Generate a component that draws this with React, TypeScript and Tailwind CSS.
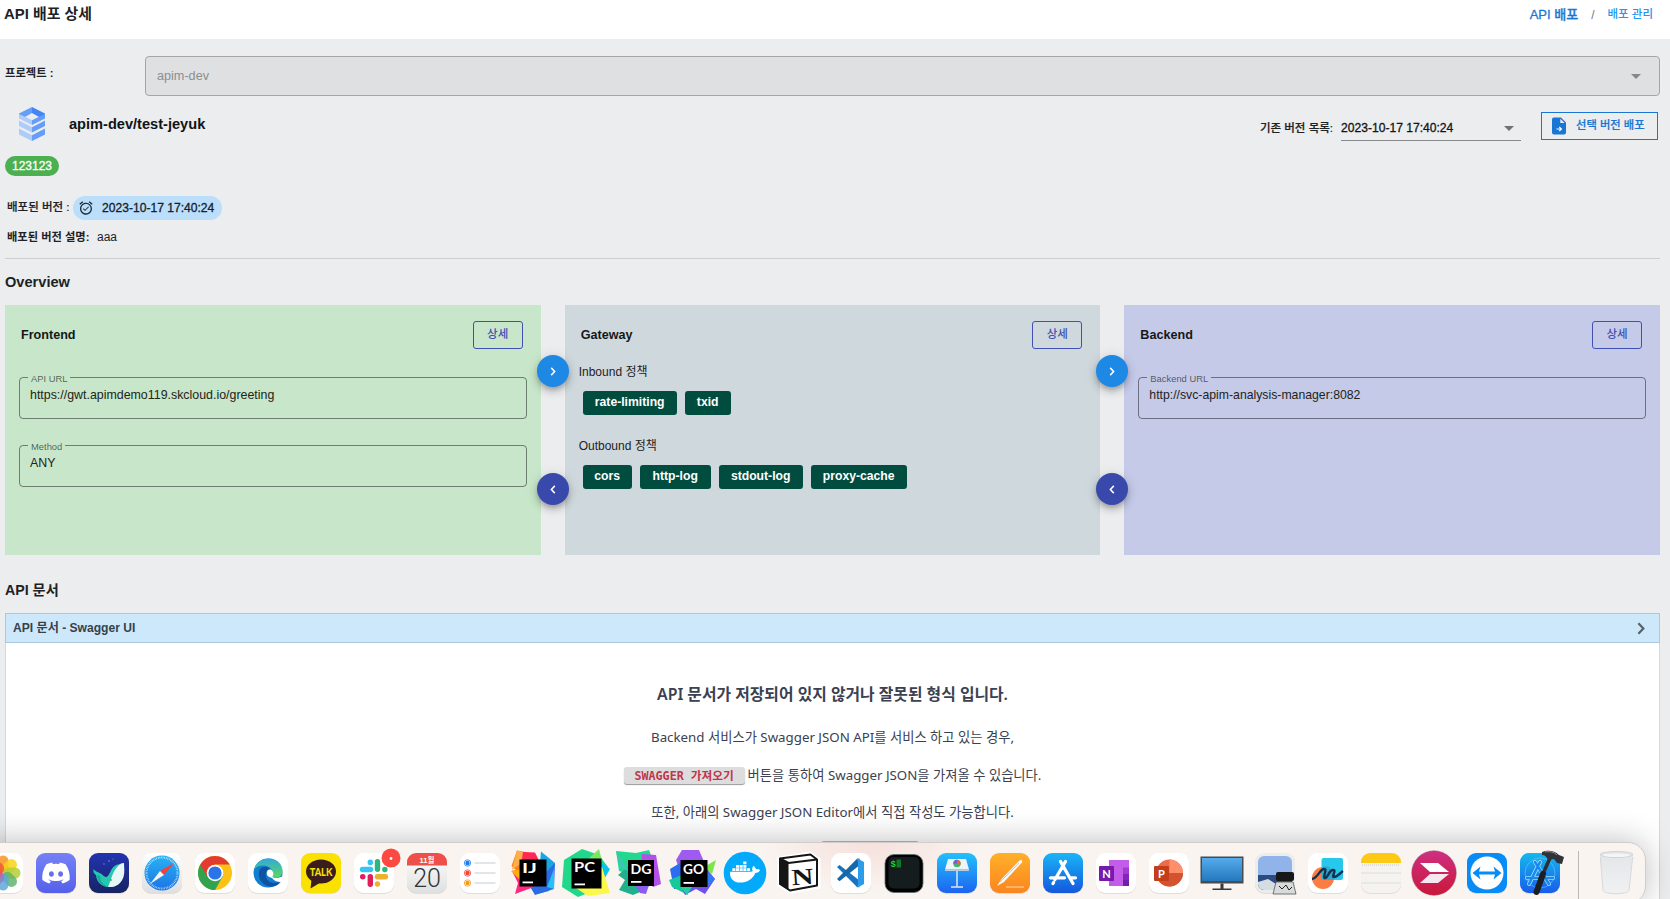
import React from "react";
import { FaDiscord, FaDocker } from "react-icons/fa";
import { SiNotion } from "react-icons/si";

const SANS = "font-['Liberation_Sans','Noto_Sans_CJK_KR',sans-serif]";

function Caret({ className }: { className: string }) {
  return (
    <svg viewBox="0 0 10 5" className={className}>
      <path d="M0 0h10L5 5z" fill="currentColor" />
    </svg>
  );
}

function StackLogo() {
  return (
    <svg viewBox="0 0 26 34" className="h-[34px] w-[26px]">
      <path d="M13 0 0 6.500V9l5 1.500L13 6z" fill="#669df6" />
      <path d="M13 0l13 6.500V9l-5 1.500L13 6z" fill="#4285f4" />
      <path d="M0 7v4.600l13 6.500v-4.900L5 9.300z" fill="#aecbfa" />
      <path d="M26 7v4.600l-13 6.500v-4.900l8-3.900z" fill="#669df6" />
      <path d="M0 13.600l13 6.600v5.200L0 18.900zM0 21.600l13 6.600V34L0 27.400z" fill="#aecbfa" />
      <path d="M26 13.600l-13 6.600v5.200l13-6.500zM26 21.600l-13 6.600V34l13-6.600z" fill="#669df6" />
    </svg>
  );
}

function AlarmIcon() {
  return (
    <svg viewBox="0 0 24 24" className="h-4 w-4 text-[#1c2b36]" fill="currentColor">
      <path d="M22 5.72l-4.6-3.86-1.29 1.53 4.6 3.86L22 5.72zM7.88 3.39L6.6 1.86 2 5.71l1.29 1.53 4.59-3.85zM12 4c-4.97 0-9 4.03-9 9s4.02 9 9 9a9 9 0 000-18zm0 16c-3.87 0-7-3.13-7-7s3.13-7 7-7 7 3.13 7 7-3.13 7-7 7zm-1.46-5.47L8.41 12.4l-1.06 1.06 3.18 3.18 6-6-1.06-1.06-4.93 4.95z" />
    </svg>
  );
}

function FileArrow() {
  return (
    <svg viewBox="0 0 14 18" className="h-[18px] w-[14px]">
      <path d="M2 .5h7L14 5.400v10.200a1.900 1.900 0 0 1-1.900 1.900H1.900A1.900 1.900 0 0 1 0 15.600V2.400A1.900 1.900 0 0 1 1.900.5z" fill="#1976d2" />
      <path d="M8.300 1.700V6h4.400z" fill="#ebedef" />
      <path d="M4.500 12h4M7.300 10l2.100 2-2.100 2" stroke="#fff" strokeWidth="1.200" fill="none" />
    </svg>
  );
}

function Chevron({ left, className }: { left?: boolean; className: string }) {
  return (
    <svg viewBox="0 0 6 10" className={className} fill="none" stroke="currentColor" strokeWidth="1.700">
      <path d={left ? "M5 1 1.200 5 5 9" : "M1 1l3.800 4L1 9"} />
    </svg>
  );
}

function Panel({ title, color, children }: { title: string; color: string; children: React.ReactNode }) {
  return (
    <section className={`h-[250px] flex-1 px-[14px] pt-4 ${color}`}>
      <div className="flex h-7 items-center justify-between pr-1 pl-[2px]">
        <h3 className="text-[12.6px] font-bold text-[#15181a]">{title}</h3>
        <button className="flex h-7 w-[50px] items-center justify-center rounded-[3px] border border-[#3f51b5] pb-[1px] text-[11.5px] font-medium text-[#3f51b5]">
          상세
        </button>
      </div>
      {children}
    </section>
  );
}

function Field({ label, value, className, valueClass }: { label: string; value: string; className: string; valueClass: string }) {
  return (
    <fieldset className={`h-[47px] rounded-[4px] border border-black/45 px-[10px] ${className}`}>
      <legend className="-ml-[2px] h-[10px] px-[3px] text-[9.4px] leading-[13px] text-black/60">{label}</legend>
      <div className={`mt-1 leading-[18px] text-[#1d2420] ${valueClass}`}>{value}</div>
    </fieldset>
  );
}

function Tags({ items }: { items: { name: string; w: string }[] }) {
  return (
    <div className="flex gap-2 pl-1">
      {items.map((t) => (
        <span key={t.name} className={`flex h-6 items-center justify-center rounded-[3px] bg-[#004d40] pb-[1px] text-[12.2px] font-bold text-white ${t.w}`}>
          {t.name}
        </span>
      ))}
    </div>
  );
}

function Arrows() {
  const base = "flex h-8 w-8 shrink-0 items-center justify-center rounded-full text-white shadow-[0_3px_5px_-1px_rgba(0,0,0,.2),0_5px_9px_rgba(0,0,0,.16),0_1px_14px_rgba(0,0,0,.1)]";
  return (
    <div className="z-10 -mx-1 flex w-8 shrink-0 flex-col gap-[86px] pt-[50px]">
      <span className={`${base} bg-[#1e88e5]`}><Chevron className="h-[9px] w-[6px]" /></span>
      <span className={`${base} bg-[#3949ab]`}><Chevron left className="h-[9px] w-[6px]" /></span>
    </div>
  );
}

/* ---------- dock ---------- */

function Tile({ children, fill = "#fff" }: { children?: React.ReactNode; fill?: string }) {
  return (
    <>
      <rect x="4" y="4.700" width="40" height="40" rx="9" fill="#000" opacity=".13" />
      <rect x="4" y="4" width="40" height="40" rx="9" fill={fill} />
      {children}
    </>
  );
}

function Grad({ id, a, b }: { id: string; a: string; b: string }) {
  return (
    <linearGradient id={id} x1="0" y1="0" x2="0" y2="1">
      <stop offset="0" stopColor={a} />
      <stop offset="1" stopColor={b} />
    </linearGradient>
  );
}

function JetBrains({ x, y, s, label, children }: { x: number; y: number; s: number; label: string; children: React.ReactNode }) {
  return (
    <>
      {children}
      <rect x={x} y={y} width={s} height={s} fill="#000" />
      <text x={x + 2.500} y={y + 13.500} fill="#fff" fontSize="13.500" fontWeight="700" fontFamily="Lato, sans-serif" textLength={label === "IJ" ? 15 : 21} lengthAdjust="spacingAndGlyphs">{label}</text>
      <rect x={x + 3} y={y + s - 5} width="10.500" height="1.800" fill="#fff" />
    </>
  );
}

const petals = ["#f7941d", "#f7d417", "#b5cf35", "#5eb56b", "#5fa8d8", "#8d7cc3", "#d65f8f", "#ef5a3c"];

const icons: React.ReactNode[] = [
  <Tile>
    {petals.map((c, i) => (
      <rect key={c} x="18.500" y="6.500" width="11" height="17" rx="5.500" fill={c} opacity=".85" transform={`rotate(${i * 45} 24 24)`} />
    ))}
  </Tile>,
  <Tile fill="url(#discord)">
    <FaDiscord x="9" y="9" size="30" color="#fff" />
  </Tile>,
  <Tile fill="url(#whale)">
    <path d="M8.500 20c1.500 2.500 5 3 8 5 1.500 1 3 3 5 3 3-1 4-8 8-11 3-2 6-2 9-3-1 4 1 9-1 15-2 6-7 9-13 9-9 0-13-6-13.500-12-2-1-3-3-2.500-6z" fill="#25c7b1" />
    <path d="M23 38c3-6 4-15 10-21 2-2 4-3 6-3 0 4 1 9-.5 14C36 35 31 38.500 23 38z" fill="#e8f6f5" />
    <path d="M12 26c1 8 6 12 12 12-6-2-9-5-9-11z" fill="#10a99a" />
    <circle cx="26" cy="31" r=".8" fill="#173" />
    <circle cx="19" cy="15" r=".7" fill="#7f8ff0" /><circle cx="24" cy="12" r=".8" fill="#7f8ff0" /><circle cx="28" cy="10" r=".6" fill="#7f8ff0" />
  </Tile>,
  <Tile fill="url(#silver)">
    <circle cx="24" cy="24" r="17.500" fill="url(#safari)" />
    <circle cx="24" cy="24" r="15.500" fill="none" stroke="#fff" strokeWidth="2" strokeDasharray=".6 1.030" opacity=".85" />
    <path d="M36 14 22 22l4 4z" fill="#f5403a" />
    <path d="M12 35l10-13 4 4z" fill="#f2f4f6" />
  </Tile>,
  <Tile>
    <circle cx="24" cy="24" r="17" fill="#fbc116" />
    <path d="M24 24 9.300 15.500A17 17 0 0 0 24 41l8-14z" fill="#31a350" />
    <path d="M9.300 15.500A17 17 0 0 1 38.700 15.500H24l-7.400 12.800z" fill="#e33b2e" />
    <circle cx="24" cy="24" r="8.300" fill="#fff" />
    <circle cx="24" cy="24" r="6.600" fill="#2a74e8" />
  </Tile>,
  <Tile>
    <circle cx="24" cy="24" r="14.500" fill="#0f7fd2" />
    <path d="M10 21C12 13 18 9.500 25 9.500c9 0 14 7 13.500 13.500-.5 5-5 6.500-10 5.500 3-7-3-12-9-12-5 0-8 2-9.500 4.500z" fill="url(#edge)" />
    <path d="M16 20c-4 9 3 18 13 17.500 3-.3 6-2 8-5-9 4-17-1-15-9 .5-2 2-4 4-4-4-3-8-2-10 .5z" fill="#1250a0" />
    <path d="M28 29c-4-1-6-3-5-6s4-3 5.500-1 1 4 0 5.500c1 2 5 2 9 0l1 1.500-2 4c-3 0-6-1-8.500-4z" fill="#fff" />
  </Tile>,
  <Tile fill="#fbe100">
    <ellipse cx="24" cy="22.500" rx="15" ry="12" fill="#3a1d1d" />
    <path d="M14.500 31l-1 8.500 10-6z" fill="#3a1d1d" />
    <text x="12.800" y="26.800" fontSize="11" fontWeight="900" fontFamily="Lato, sans-serif" fill="#fbe100" textLength="22.500" lengthAdjust="spacingAndGlyphs">TALK</text>
  </Tile>,
  <Tile>
    <g strokeWidth="5.400" strokeLinecap="round">
      <path d="M12.500 20.500h8" stroke="#36c5f0" /><path d="M20.300 13.300v.1" stroke="#36c5f0" />
      <path d="M27.500 12.700v7.500" stroke="#2eb67d" /><path d="M34.800 20.500h.1" stroke="#2eb67d" />
      <path d="M27.500 27.700h8" stroke="#ecb22e" /><path d="M27.500 35v.1" stroke="#ecb22e" />
      <path d="M20.300 27.700v7.500" stroke="#e01e5a" /><path d="M12.700 27.700h.1" stroke="#e01e5a" />
    </g>
    <circle cx="41" cy="9" r="9.500" fill="#fc4a42" /><circle cx="41" cy="9.500" r="1.400" fill="#fff" />
  </Tile>,
  <Tile fill="url(#silver)">
    <path d="M4 16.500V13a9 9 0 0 1 9-9h22a9 9 0 0 1 9 9v3.500z" fill="#ee4f49" />
    <text x="24" y="13.500" textAnchor="middle" fontSize="7.500" fontWeight="700" fill="#fff" fontFamily="Liberation Sans, Noto Sans CJK KR, sans-serif">11월</text>
    <text x="24" y="37.500" textAnchor="middle" fontSize="25" fontWeight="300" fill="#333" fontFamily="Roboto, sans-serif">20</text>
  </Tile>,
  <Tile>
    {["#1b7cf2", "#f24438", "#f59b1b"].map((c, i) => (
      <g key={c}>
        <circle cx="11.500" cy={14 + i * 10} r="3.200" fill="none" stroke={c} strokeWidth=".8" />
        <circle cx="11.500" cy={14 + i * 10} r="2.200" fill={c} />
        <path d={`M18.500 ${14 + i * 10}h21`} stroke="#c9cbce" strokeWidth="1" />
      </g>
    ))}
  </Tile>,
  <JetBrains x={10.500} y={10.500} s={27} label="IJ">
    <path d="M2.500 17 8 1.500l16 3 4 8-14 15z" fill="#fc801d" />
    <path d="M8 1.500l7 1.500-4 12-8 6z" fill="#fdb04a" />
    <path d="M14 3l12 .5 4 8-18 6z" fill="#fe2857" />
    <path d="M32 2.500 46 14l-6 28-12 3z" fill="#1aa6e4" />
    <path d="M38 22l8-8-1 26-19 6-6-10z" fill="#2b6be6" /><path d="M38 38l7-18v20z" fill="#22c4f2" />
    <path d="M3 22l8-2 14 18-19 7 3-11z" fill="#fe2a7f" /><path d="M2 22l10-2v12z" fill="#ffb000" />
  </JetBrains>,
  <JetBrains x={9.500} y={9.500} s={30} label="PC">
    <path d="M0 38 2 11 20 0l17 6 9 12-20 26-10 4z" fill="#21d789" />
    <path d="M37 0l3 12H24z" fill="#7be663" /><path d="M38 12l10 8-8 14z" fill="#07c3f2" />
    <path d="M40 18l8 26-22 3-12-8z" fill="#fcf84a" />
  </JetBrains>,
  <JetBrains x={13} y={11} s={26} label="DG">
    <path d="M1 2l20 2 13-3 6 16-20 10L4 22z" fill="#22d88f" />
    <path d="M27 5l14 1 5 29-8 3-12-20z" fill="#b350e8" />
    <path d="M3 26l12-10 20 20-5 5-12 5-14-5 6-10z" fill="#20b08b" />
    <path d="M20 36h14l-3 9-6-1z" fill="#8b5cf0" /><path d="M1 2l13 20-9-3z" fill="#3ac9b0" />
  </JetBrains>,
  <JetBrains x={12.500} y={11} s={27} label="GO">
    <path d="M14 1h17l6 14-24 10-5-14z" fill="#9f5bf0" />
    <path d="M2 20l10-6 6 26-12 0z" fill="#2c6cf0" /><path d="M1 31l13-5 6 20L4 38z" fill="#18c89a" />
    <path d="M48 11l-4 14-8-7z" fill="#7be648" />
    <path d="M39 20l8 10-10 15-9-5-11 6-4-8z" fill="#6f4ff0" /><path d="M12 38l12 0-5 8z" fill="#20d0a0" /><path d="M39 22l8 8-8 8z" fill="#2f7af0" />
  </JetBrains>,
  <>
    <circle cx="24" cy="24" r="21.300" fill="#03a9fa" />
    <FaDocker x="9" y="8" size="30" color="#fff" />
  </>,
  <>
    <path d="M5 9 36 4l9 6v28l-29 5L5 36z" fill="#fff" stroke="#fff" strokeWidth="3" strokeLinejoin="round" />
    <path d="M6 9.500 36.500 5.500 43 10.500v26L16 41.500 6 35z" fill="#fff" stroke="#151515" strokeWidth="2" strokeLinejoin="round" />
    <path d="M6 9.500 14.500 14v27L6 35z" fill="#151515" />
    <path d="M6 9.500 14.500 14 43 10.500" fill="none" stroke="#151515" strokeWidth="2" strokeLinejoin="round" />
    <text x="17.500" y="35.500" fontSize="23" fontWeight="700" fill="#151515" fontFamily="Liberation Serif, serif" transform="rotate(-4 28 27)" textLength="22" lengthAdjust="spacingAndGlyphs">N</text>
  </>,
  <Tile>
    <path d="M10 18l2.500-2 20 15.500v6.700L30 38z" fill="#1c72bd" />
    <path d="M10 30l2.500 2.200 20-16V9.600L30 9.800z" fill="#1768a8" />
    <path d="M30.500 9.500 37 13v22l-6.500 3.500L29 37.500l2-1.500V12l-2-1.500z" fill="#2b9bea" />
  </Tile>,
  <>
    <rect x="5" y="5.500" width="38" height="38" rx="9" fill="#000" stroke="#5b6a6e" strokeWidth=".8" />
    <rect x="8.500" y="8" width="31" height="31.500" rx="5" fill="#141c1e" />
    <text x="10.500" y="17.500" fontSize="9" fontWeight="700" fill="#1fd132" fontFamily="Liberation Mono, monospace">$</text>
    <rect x="16.500" y="10.500" width="4.500" height="8" fill="#0f7a20" />
  </>,
  <Tile fill="url(#keynote)">
    <path d="M15 10h18l3 10.500H12z" fill="#eef4fb" /><path d="M12 20.500h24v1.500H12z" fill="#b9cde4" />
    <circle cx="24" cy="14.500" r="3.700" fill="#40b868" /><path d="M24 14.500v-3.700a3.700 3.700 0 0 1 3.200 5.500z" fill="#f0603c" /><path d="M24 14.500l-3.700.3a3.700 3.700 0 0 1 3.700-4z" fill="#7a5cd0" />
    <path d="M24 22v15.500" stroke="#dce7f2" strokeWidth="1.500" /><path d="M18 38h12" stroke="#dce7f2" strokeWidth="1.500" />
  </Tile>,
  <Tile fill="url(#pages)">
    <path d="M11 37l4.500-7L33 12c2-2 4-1 3 1.500L18 33z" fill="#f7f7f5" /><path d="M14 33l19-19" stroke="#b9b2a8" strokeWidth=".7" />
    <path d="M20 38h18" stroke="#ffe6c0" strokeWidth=".9" />
  </Tile>,
  <Tile fill="url(#store)">
    <g stroke="#fff" strokeWidth="3.300" strokeLinecap="round">
      <path d="M26.500 12.500 16 30.500M21.500 12.500l12.500 22M11.500 28.800h14M31.500 28.800h5M14 34.500l.6-1" />
    </g>
  </Tile>,
  <Tile>
    <rect x="17" y="11" width="20" height="26" fill="#c45cea" />
    <path d="M31 18.500h6v7h-6z" fill="#a33bd0" /><path d="M31 25h6v6h-6z" fill="#8128b8" /><path d="M31 31h6v6h-6z" fill="#6f20a8" />
    <rect x="7" y="17" width="15" height="15" rx="1" fill="#7719aa" />
    <text x="14.500" y="28.500" textAnchor="middle" fontSize="11" fontWeight="700" fill="#fff" fontFamily="Lato, sans-serif">N</text>
  </Tile>,
  <Tile>
    <circle cx="24.500" cy="24" r="13.500" fill="#ed6c47" /><path d="M24.500 10.500A13.500 13.500 0 0 1 38 24H24.500z" fill="#ff8f6b" /><path d="M38 24a13.500 13.500 0 0 1-27 0z" fill="#d35230" />
    <rect x="9" y="17" width="15" height="15" rx="1" fill="#c43e1c" />
    <text x="16.500" y="28.500" textAnchor="middle" fontSize="11" fontWeight="700" fill="#fff" fontFamily="Lato, sans-serif">P</text>
  </Tile>,
  <>
    <rect x="2.500" y="7.500" width="43" height="27" fill="#4b4b4d" />
    <rect x="4" y="9" width="40" height="23" fill="url(#screen)" />
    <path d="M22.500 34.500h3v5h-3zM14.500 39.500h19v1.500h-19z" fill="#39393b" />
  </>,
  <Tile fill="#ececec">
    <rect x="7" y="7" width="34" height="34" rx="6" fill="#90b4ea" />
    <path d="M7 26h34v9a6 6 0 0 1-6 6H13a6 6 0 0 1-6-6z" fill="#2b4a80" /><path d="M7 33l10-3 8 5v6H13a6 6 0 0 1-6-6z" fill="#d6dde2" />
    <path d="M25 33h17l3 12H22z" fill="#d9dadb" stroke="#555" strokeWidth=".8" /><rect x="25" y="23" width="18" height="9" rx="2" fill="#171717" />
    <path d="M28 37l3 3 4-4 3 5 3-3" stroke="#222" strokeWidth="1" fill="none" />
  </Tile>,
  <Tile>
    <circle cx="19" cy="29" r="11" fill="#fb7d45" />
    <rect x="17.500" y="9" width="21.500" height="22" rx="2" fill="#28c8ec" /><path d="M17.500 19c6-4 9 0 12.500 5v7H19.500a2 2 0 0 1-2-2z" fill="#2f9fc4" opacity=".75" />
    <path d="M8 30c6-1 8-10 12-10s-2 9 1 9 4-8 8-8-2 7 1 7 5-3 9-6" stroke="#12324e" strokeWidth="2.400" fill="none" />
  </Tile>,
  <Tile fill="#f4f3f0">
    <path d="M4 14v-1a9 9 0 0 1 9-9h22a9 9 0 0 1 9 9v1z" fill="#fdc914" />
    <path d="M5 16h38" stroke="#bdbbb6" strokeWidth=".8" strokeDasharray="1 1" /><path d="M4 24h40M4 34h40" stroke="#d8d6d2" strokeWidth=".8" />
  </Tile>,
  <>
    <circle cx="24" cy="24" r="22.800" fill="#b8a8b0" /><circle cx="24" cy="24" r="22.200" fill="url(#skitch)" />
    <path d="M10 14h18l11 9H20z" fill="#fff" /><path d="M10 34h18l11-9H20z" fill="#f4e9ee" />
  </>,
  <Tile fill="#078cf7">
    <circle cx="24" cy="24" r="16.500" fill="#fff" />
    <path d="M9.500 24l8-6.500-1.500 5h16l-1.500-5 8 6.500-8 6.500 1.500-5H16l1.500 5z" fill="#078cf7" />
  </Tile>,
  <Tile fill="url(#xcode)">
    <circle cx="24" cy="24" r="15" fill="none" stroke="#79d3fb" strokeWidth=".7" opacity=".7" />
    <g fill="none" stroke="#a5dcfb" strokeWidth="4" strokeLinecap="round"><path d="M24 13l-11 22M19 13l14 22M11 29h26" /></g>
    <g fill="none" stroke="#1689ee" strokeWidth="2.500" strokeLinecap="round"><path d="M24 13l-11 22M19 13l14 22M11 29h26" /></g>
    <path d="M34 9 26 27" stroke="#2c2f36" strokeWidth="3.500" />
    <path d="M27 25 20.500 43" stroke="#1c1e22" strokeWidth="6" strokeLinecap="round" />
    <path d="M26 3c5-2 12-2 17 3l5 2-2 7-5-1-3-4-6 1c-1-3-3-5-6-5z" fill="#30333a" /><path d="M29 3c4-1 9 0 12 3" stroke="#8e939b" strokeWidth="1" fill="none" />
  </Tile>,
];

const TrashIcon = (
  <>
    <path d="M8 5.500 11 41c.5 5 25.500 5 26 0L41 5.500z" fill="url(#trash)" />
    <path d="M8.300 8 11 41c.5 5 25.500 5 26 0L40.700 8" fill="none" stroke="#d3d5d8" strokeWidth=".9" />
    <ellipse cx="24.500" cy="5.500" rx="16.500" ry="3" fill="#e3e5e7" stroke="#cdd0d3" strokeWidth=".9" />
    <ellipse cx="24.500" cy="6.200" rx="13.500" ry="1.800" fill="#f4f5f6" />
  </>
);

function DockIcon({ children }: { children: React.ReactNode }) {
  return (
    <div className="flex w-[53px] shrink-0 justify-center">
      <svg viewBox="0 0 48 48" className="h-12 w-12 overflow-visible">{children}</svg>
    </div>
  );
}

function Dock() {
  return (
    <div className="absolute top-[842px] -left-[25px] z-20 flex h-[62px] w-[1671px] rounded-r-[18px] border border-[#d0cdcb] bg-[#f9f4f0] bg-[radial-gradient(ellipse_110px_50px_at_895px_0px,#f6e0dc_0%,transparent_100%)] pt-[5.5px] shadow-[0_0_32px_rgba(0,0,0,.27)]">
      <svg className="absolute h-0 w-0">
        <defs>
          <Grad id="discord" a="#7681f6" b="#5560ea" />
          <Grad id="whale" a="#2333b0" b="#172463" />
          <Grad id="silver" a="#ffffff" b="#dedfe0" />
          <Grad id="safari" a="#28b3f5" b="#1b74e4" />
          <Grad id="edge" a="#32a9d8" b="#5bd95f" />
          <Grad id="keynote" a="#22c1fb" b="#1d63f0" />
          <Grad id="pages" a="#ffb02a" b="#fb851f" />
          <Grad id="store" a="#19b5f8" b="#1458dc" />
          <Grad id="screen" a="#55abec" b="#2478bd" />
          <Grad id="skitch" a="#cf2f82" b="#c9183a" />
          <Grad id="xcode" a="#14b9ee" b="#1a5cec" />
          <Grad id="trash" a="#e4e6e9" b="#f0f1f2" />
        </defs>
      </svg>
      {icons.map((icon, i) => (
        <DockIcon key={i}>{icon}</DockIcon>
      ))}
      <div className="mt-[2px] ml-[12px] h-[54px] w-px shrink-0 bg-[#bdb9b6]" />
      <div className="ml-[10px]"><DockIcon>{TrashIcon}</DockIcon></div>
    </div>
  );
}

export default function App() {
  return (
    <div className={`relative flex h-[899px] w-[1670px] flex-col overflow-hidden bg-[#ebedef] whitespace-nowrap text-[#1f2225] ${SANS}`}>
      <header className="flex h-[39px] shrink-0 items-center justify-between bg-white pr-[17px] pb-[10px] pl-1">
        <h1 className="text-[14.9px] font-bold">API 배포 상세</h1>
        <nav className="flex items-center">
          <span className="text-[13px] font-medium text-[#1976d2] [-webkit-text-stroke:0.3px]">API 배포</span>
          <span className="mx-[13px] text-[12px] text-[#777]">/</span>
          <span className="text-[11.5px] font-medium text-[#2196f3]">배포 관리</span>
        </nav>
      </header>

      <main className="flex min-h-0 flex-1 flex-col px-[5px] pr-[10px]">
        <div className="mt-[17px] flex h-10 shrink-0">
          <div className="w-[140px] pt-[8px] text-[11.3px] leading-[18px] font-bold">프로젝트 :</div>
          <div className="flex flex-1 items-center justify-between rounded-[4px] border border-[#a3a5a6] bg-[#dfe0e2] pr-[18px] pl-[11px] text-[12.65px] text-[#8c8e90]">
            <span>apim-dev</span>
            <Caret className="h-[5px] w-[10px] text-[#858789]" />
          </div>
        </div>

        <div className="mt-[11px] flex h-[34px] shrink-0 pl-[14px]">
          <StackLogo />
          <h2 className="ml-6 pt-[7px] text-[14.6px] leading-[20px] font-bold text-[#111416]">apim-dev/test-jeyuk</h2>
          <div className="ml-auto flex h-[34px] items-start pt-[5px] pr-[2px]">
            <span className="mt-[7px] text-[11.5px] leading-[18px] font-medium [-webkit-text-stroke:0.2px]">기존 버전 목록:</span>
            <div className="ml-2 flex h-[29px] w-[180px] items-center justify-between border-b border-[#87898b] pt-[4px] pr-[7px] text-[12.1px] text-[#111416]">
              <span className="[-webkit-text-stroke:0.3px]">2023-10-17 17:40:24</span>
              <Caret className="h-[5px] w-[10px] text-[#707274]" />
            </div>
            <button className="ml-5 flex h-7 w-[117px] items-center border border-[#1976d2] pl-[10px] text-[11.3px] font-medium text-[#1976d2] [-webkit-text-stroke:0.2px]">
              <FileArrow />
              <span className="ml-[10px] pb-[1px]">선택 버전 배포</span>
            </button>
          </div>
        </div>

        <div className="mt-[15px] flex h-5 w-[54px] shrink-0 items-center justify-center rounded-full bg-[#4caf50] text-[12px] text-white [-webkit-text-stroke:0.3px]">123123</div>

        <div className="mt-5 flex h-6 shrink-0 items-center pl-[2px]">
          <span className="w-[66px] text-[11.5px] font-medium [-webkit-text-stroke:0.2px]">배포된 버전 :</span>
          <span className="flex h-6 w-[149px] items-center rounded-full bg-[#bbdefb] pl-[5px] text-[12.1px] text-[#15202b]">
            <AlarmIcon />
            <span className="ml-2 [-webkit-text-stroke:0.3px]">2023-10-17 17:40:24</span>
          </span>
        </div>
        <div className="mt-[7px] flex h-5 shrink-0 items-center pl-[2px] text-[12px]">
          <span className="w-[90px] text-[11.25px] font-bold">배포된 버전 설명:</span>
          <span>aaa</span>
        </div>
        <div className="mt-[11px] h-px shrink-0 bg-[#cccecf]" />

        <h2 className="mt-[13px] h-5 shrink-0 text-[14.6px] leading-[20px] font-bold">Overview</h2>
        <div className="mt-[13px] flex h-[250px] shrink-0">
          <Panel title="Frontend" color="bg-[#c8e6c9]">
            <Field label="API URL" value="https://gwt.apimdemo119.skcloud.io/greeting" className="mt-[23px]" valueClass="text-[12.4px]" />
            <Field label="Method" value="ANY" className="mt-[21px]" valueClass="text-[12.4px]" />
          </Panel>
          <Arrows />
          <Panel title="Gateway" color="bg-[#cfd8dc]">
            <div className="mt-[14px] mb-[10px] text-[12px] leading-[18px]">Inbound 정책</div>
            <Tags items={[{ name: "rate-limiting", w: "w-[94px]" }, { name: "txid", w: "w-[46px]" }]} />
            <div className="mt-[22px] mb-[10px] text-[12px] leading-[18px]">Outbound 정책</div>
            <Tags items={[{ name: "cors", w: "w-[49px]" }, { name: "http-log", w: "w-[71px]" }, { name: "stdout-log", w: "w-[84px]" }, { name: "proxy-cache", w: "w-[96px]" }]} />
          </Panel>
          <Arrows />
          <Panel title="Backend" color="bg-[#c5cae9]">
            <Field label="Backend URL" value="http://svc-apim-analysis-manager:8082" className="mt-[23px]" valueClass="text-[12.25px]" />
          </Panel>
        </div>

        <h2 className="mt-[25px] h-5 shrink-0 text-[14.2px] leading-[20px] font-bold">API 문서</h2>
        <div className="mt-[13px] flex h-[30px] shrink-0 items-center justify-between border border-[#abc9de] bg-[#cde8fb] pr-[14px] pl-[7px] text-[12.1px] font-bold text-[#36424a]">
          <span>API 문서 - Swagger UI</span>
          <Chevron className="h-[13px] w-[8px] text-[#55626c]" />
        </div>
        <div className="flex flex-1 flex-col items-center border-x border-[#d5d7da] bg-white pt-[39px] font-['Noto_Sans','Noto_Sans_CJK_KR',sans-serif] text-[13.3px] text-[#3b4151]">
          <h3 className="h-6 text-[15.85px] leading-[24px] font-semibold">API 문서가 저장되어 있지 않거나 잘못된 형식 입니다.</h3>
          <p className="mt-[21px] h-5 leading-[20px]">Backend 서비스가 Swagger JSON API를 서비스 하고 있는 경우,</p>
          <p className="mt-[18px] flex h-5 leading-[20px]">
            <span className="mt-[2px] mr-[3px] flex h-[17px] w-[121px] items-center justify-center rounded-[3px] bg-[#ddd] font-['DejaVu_Sans_Mono','Noto_Sans_CJK_KR',monospace] text-[11.7px] font-bold text-[#c0364a] shadow-[0_1px_1px_#999]">SWAGGER 가져오기</span>
            <span>버튼을 통하여 Swagger JSON을 가져올 수 있습니다.</span>
          </p>
          <p className="mt-[17px] h-5 leading-[20px]">또한, 아래의 Swagger JSON Editor에서 직접 작성도 가능합니다.</p>
          <div className="mt-[19px] ml-[75px] h-[17px] w-[98px] rounded-[3px] bg-[#bbb]" />
        </div>
      </main>
      <Dock />
    </div>
  );
}
